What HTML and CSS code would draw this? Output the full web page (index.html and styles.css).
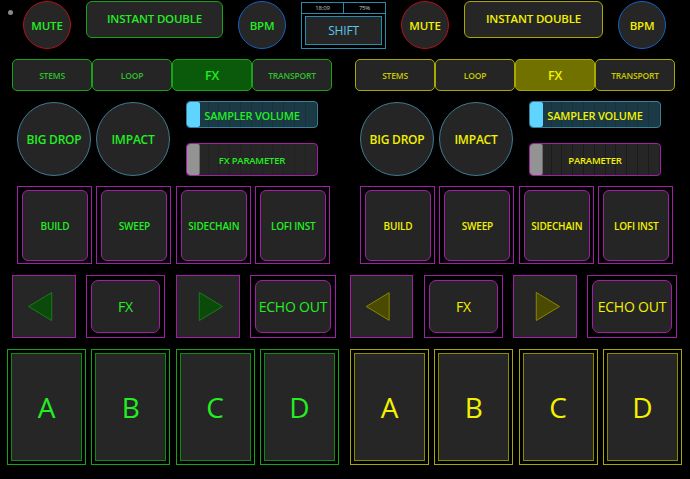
FILE: index.html
```html
<!DOCTYPE html>
<html>
<head>
<meta charset="utf-8">
<link rel="stylesheet" href="styles.css">
</head>
<body>
<div class="top">
  <span class="dot"></span>
  <div class="knob mute g first">MUTE</div>
  <div class="btn instant g">INSTANT DOUBLE</div>
  <div class="knob bpm g">BPM</div>
  <div class="shift">
    <div class="status"><span>18:09</span><span>75%</span></div>
    <div class="shift-btn">SHIFT</div>
  </div>
  <div class="knob mute y">MUTE</div>
  <div class="btn instant y wide">INSTANT DOUBLE</div>
  <div class="knob bpm y">BPM</div>
</div>

<div class="decks">
  <section class="deck deck-l g">
    <div class="tabs">
      <div class="tab">STEMS</div>
      <div class="tab">LOOP</div>
      <div class="tab active">FX</div>
      <div class="tab">TRANSPORT</div>
    </div>
    <div class="row3">
      <div class="circle">BIG DROP</div>
      <div class="circle">IMPACT</div>
      <div class="sliders">
        <div class="slider sampler"><span class="handle"></span><span class="label">SAMPLER VOLUME</span></div>
        <div class="slider param"><span class="handle"></span><span class="label">FX PARAMETER</span></div>
      </div>
    </div>
    <div class="pads">
      <div class="pad"><div class="pad-in">BUILD</div></div>
      <div class="pad"><div class="pad-in">SWEEP</div></div>
      <div class="pad"><div class="pad-in">SIDECHAIN</div></div>
      <div class="pad"><div class="pad-in">LOFI INST</div></div>
    </div>
    <div class="nav">
      <div class="arrow"><svg viewBox="0 0 64 63"><polygon points="16,31.5 40,17 40,46"/></svg></div>
      <div class="navbtn fx"><div class="pad-in">FX</div></div>
      <div class="arrow"><svg viewBox="0 0 64 63"><polygon points="23,17 23,46 47,31.5"/></svg></div>
      <div class="navbtn echo"><div class="pad-in">ECHO OUT</div></div>
    </div>
    <div class="abcd">
      <div class="big"><div class="big-in">A</div></div>
      <div class="big"><div class="big-in">B</div></div>
      <div class="big"><div class="big-in">C</div></div>
      <div class="big"><div class="big-in">D</div></div>
    </div>
  </section>

  <section class="deck deck-r y">
    <div class="tabs">
      <div class="tab">STEMS</div>
      <div class="tab">LOOP</div>
      <div class="tab active">FX</div>
      <div class="tab">TRANSPORT</div>
    </div>
    <div class="row3">
      <div class="circle">BIG DROP</div>
      <div class="circle">IMPACT</div>
      <div class="sliders">
        <div class="slider sampler"><span class="handle"></span><span class="label">SAMPLER VOLUME</span></div>
        <div class="slider param"><span class="handle"></span><span class="label">PARAMETER</span></div>
      </div>
    </div>
    <div class="pads">
      <div class="pad"><div class="pad-in">BUILD</div></div>
      <div class="pad"><div class="pad-in">SWEEP</div></div>
      <div class="pad"><div class="pad-in">SIDECHAIN</div></div>
      <div class="pad"><div class="pad-in">LOFI INST</div></div>
    </div>
    <div class="nav">
      <div class="arrow"><svg viewBox="0 0 64 63"><polygon points="16,31.5 40,17 40,46"/></svg></div>
      <div class="navbtn fx"><div class="pad-in">FX</div></div>
      <div class="arrow"><svg viewBox="0 0 64 63"><polygon points="23,17 23,46 47,31.5"/></svg></div>
      <div class="navbtn echo"><div class="pad-in">ECHO OUT</div></div>
    </div>
    <div class="abcd">
      <div class="big"><div class="big-in">A</div></div>
      <div class="big"><div class="big-in">B</div></div>
      <div class="big"><div class="big-in">C</div></div>
      <div class="big"><div class="big-in">D</div></div>
    </div>
  </section>
</div>
</body>
</html>
```

FILE: styles.css
```css
* { box-sizing: border-box; margin: 0; padding: 0; }

body {
  background: #000;
  width: 690px;
  height: 479px;
  overflow: hidden;
  font-family: "Open Sans", "DejaVu Sans", sans-serif;
  font-weight: 600;
  letter-spacing: -0.2px;
}

.g { --fg: #22ee22; --fg2: #2cc02c; --bd: #17a317; --bd2: #118a11; --act: #0b5a0b; --tri: #0b4a0b; --tri-bd: #168016; }
.y { --fg: #f2f200; --fg2: #caca00; --bd: #a8a800; --bd2: #8a8a00; --act: #717100; --tri: #4a4a00; --tri-bd: #8a8a00; }

/* ---------- top row ---------- */
.top {
  display: flex;
  align-items: flex-start;
  height: 50px;
  padding-top: 1px;
}

.dot {
  width: 5px;
  height: 5px;
  border-radius: 50%;
  background: #8a8a8a;
  margin: 9px 0 0 8px;
}

.knob {
  width: 48px;
  height: 48px;
  margin-left: 15px;
  border-radius: 50%;
  border: 1.5px solid;
  background: #262626;
  color: var(--fg);
  font-size: 11.5px;
  display: flex;
  align-items: center;
  justify-content: center;
}
.knob.first { margin-left: 10px; }
.mute { border-color: #b3101c; }
.bpm { border-color: #1262c4; }

.instant {
  width: 137px;
  height: 37px;
  margin-left: 15px;
  border: 1.5px solid var(--bd);
  border-radius: 6px;
  background: #262626;
  color: var(--fg);
  font-size: 11.5px;
  display: flex;
  align-items: center;
  justify-content: center;
  padding-bottom: 2px;
}
.instant.wide { width: 139px; }

.shift {
  width: 85px;
  height: 47px;
  margin-left: 15px;
  margin-top: 1px;
  border: 1px solid #2a8ab0;
  display: flex;
  flex-direction: column;
  align-items: center;
}
.status {
  width: 100%;
  height: 11px;
  display: flex;
  border-bottom: 1px solid #2a8ab0;
}
.status span {
  flex: 1;
  font-size: 6px;
  font-weight: 400;
  line-height: 10px;
  color: #c8c8c8;
  text-align: center;
}
.status span + span { border-left: 1px solid #2a8ab0; }
.shift-btn {
  width: 77px;
  height: 29px;
  margin-top: 2px;
  border: 1px solid #2a8ab0;
  background: #252525;
  color: #5ec6ea;
  font-size: 12px;
  font-weight: 500;
  display: flex;
  align-items: center;
  justify-content: center;
}

/* ---------- decks ---------- */
.decks {
  display: grid;
  grid-template-columns: 345px 345px;
  margin-top: 9px;
}
.deck { display: flex; flex-direction: column; }

/* tabs */
.tabs { display: flex; height: 32px; }
.deck-l .tabs { margin-left: 12px; }
.deck-r .tabs { margin-left: 10px; }
.tab {
  width: 80px;
  border: 1.5px solid var(--bd);
  border-radius: 5px;
  background: #252525;
  color: var(--fg2);
  font-size: 8.5px;
  display: flex;
  align-items: center;
  justify-content: center;
}
.tab.active {
  background: var(--act);
  color: var(--fg);
  font-size: 12.5px;
}

/* circles + sliders */
.row3 { display: flex; height: 76px; margin-top: 10px; }
.deck-l .row3 { margin-left: 17px; }
.deck-r .row3 { margin-left: 15px; }
.circle {
  width: 74px;
  height: 74px;
  margin-top: 1px;
  border-radius: 50%;
  border: 1px solid #3c7d94;
  background: #252525;
  color: var(--fg);
  font-size: 12px;
  display: flex;
  align-items: center;
  justify-content: center;
}
.circle + .circle { margin-left: 5px; }

.sliders {
  width: 132px;
  margin-left: 16px;
  display: flex;
  flex-direction: column;
}
.slider {
  position: relative;
  display: flex;
  align-items: center;
  justify-content: center;
  border-radius: 4px;
  color: var(--fg);
  overflow: hidden;
}
.slider .handle {
  position: absolute;
  left: 0;
  top: 0;
  bottom: 0;
  width: 13px;
  border-radius: 3px 2px 2px 3px;
}
.slider .label { position: relative; padding-top: 1px; }
.sampler {
  height: 27px;
  border: 1.5px solid #3c8098;
  background:
    repeating-linear-gradient(90deg, transparent 0 9.8px, rgba(0,0,0,0.14) 9.8px 10.8px),
    #1c3946;
  font-size: 11px;
}
.sampler .handle { background: #5fd4ff; }
.param {
  height: 33px;
  margin-top: 15px;
  border: 1.5px solid #a41fa8;
  background:
    repeating-linear-gradient(90deg, transparent 0 9.8px, rgba(0,0,0,0.28) 9.8px 10.8px),
    #262626;
  font-size: 9.5px;
}
.deck-l .param {
  background:
    repeating-linear-gradient(90deg, transparent 0 9.8px, rgba(0,0,0,0.12) 9.8px 10.8px),
    #262626;
}
.param .handle { background: #939393; border-right: 1px solid #6a6a6a; }

/* pads */
.pads { display: flex; gap: 4.4px; height: 78px; margin-top: 9px; }
.deck-l .pads { margin-left: 17px; }
.deck-r .pads { margin-left: 15px; }
.pad {
  width: 75px;
  border: 1px solid #a21ea6;
  padding: 3px 3px 2px 4px;
  display: flex;
}
.pad-in {
  flex: 1;
  border: 1px solid #a21ea6;
  border-radius: 6px;
  background: #252525;
  color: var(--fg);
  font-size: 10px;
  display: flex;
  align-items: center;
  justify-content: center;
}

/* nav row */
.nav { display: flex; height: 63px; margin-top: 11px; }
.deck-l .nav { margin-left: 12px; }
.deck-r .nav { margin-left: 5px; }
.arrow {
  width: 64px;
  border: 1px solid #a21ea6;
  background: #262626;
}
.arrow svg { display: block; width: 100%; height: 100%; }
.arrow polygon { fill: var(--tri); stroke: var(--tri-bd); stroke-width: 1; }
.navbtn {
  border: 1px solid #a21ea6;
  padding: 4px;
  display: flex;
}
.navbtn .pad-in { font-size: 14px; font-weight: 500; border-radius: 7px; }
.deck-l .nav > :nth-child(2) { width: 79px; margin-left: 10px; }
.deck-l .nav > :nth-child(3) { margin-left: 11px; }
.deck-l .nav > :nth-child(4) { width: 86px; margin-left: 10px; }
.deck-r .nav > :nth-child(1) { width: 63px; }
.deck-r .nav > :nth-child(2) { width: 79px; margin-left: 11px; }
.deck-r .nav > :nth-child(3) { margin-left: 10px; }
.deck-r .nav > :nth-child(4) { width: 90px; margin-left: 10px; }

/* A B C D */
.abcd { display: flex; gap: 5.3px; height: 116px; margin-top: 11px; }
.deck-l .abcd { margin-left: 7px; }
.deck-r .abcd { margin-left: 5px; }
.big {
  width: 79px;
  border: 1.5px solid var(--bd);
  padding: 3px;
  display: flex;
}
.big-in {
  flex: 1;
  border: 1.5px solid var(--bd2);
  background: #262626;
  color: var(--fg);
  font-size: 28px;
  font-weight: 400;
  letter-spacing: 0;
  display: flex;
  align-items: center;
  justify-content: center;
}
```
